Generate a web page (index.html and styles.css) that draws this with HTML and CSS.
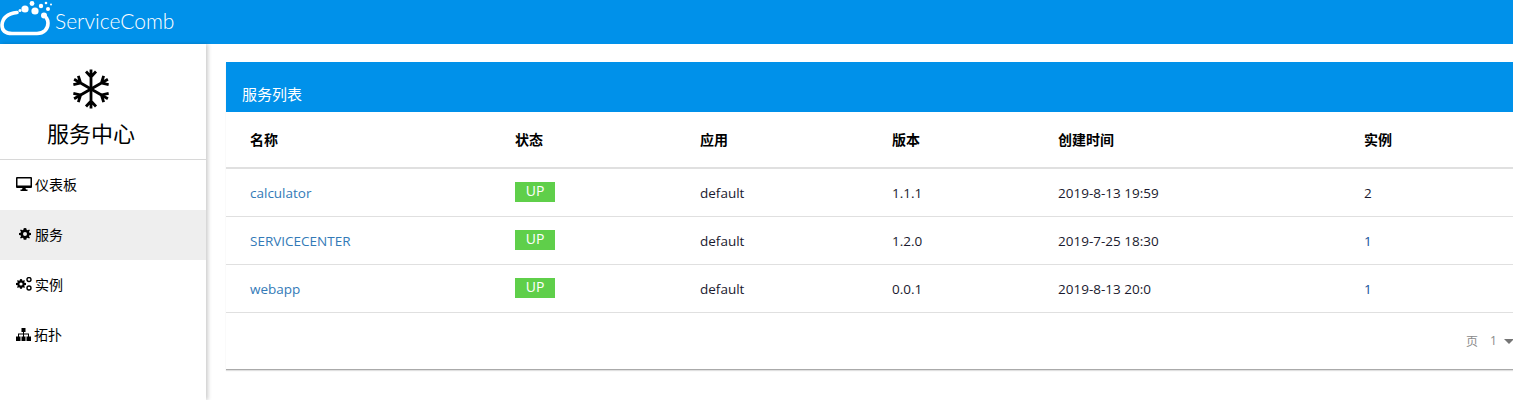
FILE: index.html
```html
<!DOCTYPE html>
<html lang="en">
<head>
  <meta charset="UTF-8">
  <title>ServiceComb</title>
  <link rel="stylesheet" href="styles.css">
</head>
<body>

<header class="topbar">
  <div class="logo">
    <svg class="logo-mark" width="52" height="36" viewBox="0 0 52 36">
      <path d="M17 12.500 C8 13.500 2.500 18 2 25 C2 31 6 33.500 12 33.500 L37 33.500 C44 33.500 48 29 48 23 C48 21 47.500 19.500 46.500 18" fill="none" stroke="#fff" stroke-width="3.600" stroke-linecap="round"/>
      <circle cx="25" cy="9" r="3.600" fill="#fff"/>
      <circle cx="32" cy="3.500" r="2.400" fill="#fff"/>
      <circle cx="35" cy="11" r="3.600" fill="#fff"/>
      <circle cx="44" cy="15.500" r="3" fill="#fff"/>
      <circle cx="41" cy="6" r="2.200" fill="#fff"/>
      <circle cx="48" cy="9" r="2" fill="#fff"/>
      <circle cx="46" cy="3" r="1.300" fill="#fff"/>
      <circle cx="51" cy="4.500" r="1" fill="#fff"/>
      <circle cx="20" cy="10.500" r="1.500" fill="#fff"/>
    </svg>
    <span class="logo-text">ServiceComb</span>
  </div>
</header>

<div class="layout">
  <aside class="sidebar">
    <div class="brand">
      <svg class="brand-icon" width="38" height="40" viewBox="-19 -20 38 40">
        <g fill="none" stroke="#000" stroke-width="2.800">
          <path d="M0 0 V-19.500 M-5 -17.500 L0 -12 L5 -17.500"/>
          <path d="M0 0 V-19.500 M-5 -17.500 L0 -12 L5 -17.500" transform="rotate(60)"/>
          <path d="M0 0 V-19.500 M-5 -17.500 L0 -12 L5 -17.500" transform="rotate(120)"/>
          <path d="M0 0 V-19.500 M-5 -17.500 L0 -12 L5 -17.500" transform="rotate(180)"/>
          <path d="M0 0 V-19.500 M-5 -17.500 L0 -12 L5 -17.500" transform="rotate(240)"/>
          <path d="M0 0 V-19.500 M-5 -17.500 L0 -12 L5 -17.500" transform="rotate(300)"/>
        </g>
      </svg>
      <div class="brand-title">服务中心</div>
    </div>
    <nav class="menu">
      <a class="menu-item">
        <svg class="menu-icon" width="16" height="14" viewBox="0 0 16 14">
          <path d="M1 0 H15 A1 1 0 0 1 16 1 V10 A1 1 0 0 1 15 11 H1 A1 1 0 0 1 0 10 V1 A1 1 0 0 1 1 0 Z M1.500 1.500 V8.500 H14.500 V1.500 Z M6.500 11 H9.500 L10 12.500 H11.500 V14 H4.500 V12.500 H6 Z" fill="#000" fill-rule="evenodd"/>
        </svg>
        <span>仪表板</span>
      </a>
      <a class="menu-item active">
        <svg class="menu-icon gear" width="12" height="12" viewBox="0 0 12 12">
          <path d="M6 0 L7.300 0.200 L7.600 1.800 L8.700 2.300 L10.100 1.400 L10.900 2.300 L10 3.700 L10.400 4.800 L12 5.100 V6.900 L10.400 7.200 L10 8.300 L10.900 9.700 L10.100 10.600 L8.700 9.700 L7.600 10.200 L7.300 11.800 H4.700 L4.400 10.200 L3.300 9.700 L1.900 10.600 L1.100 9.700 L2 8.300 L1.600 7.200 L0 6.900 V5.100 L1.600 4.800 L2 3.700 L1.100 2.300 L1.900 1.400 L3.300 2.300 L4.400 1.800 L4.700 0.200 Z M6 4 A2 2 0 1 0 6 8 A2 2 0 1 0 6 4 Z" fill="#000" fill-rule="evenodd"/>
        </svg>
        <span>服务</span>
      </a>
      <a class="menu-item">
        <svg class="menu-icon" width="16" height="14" viewBox="0 0 16 14">
          <path d="M5 2 L6 2.200 L6.300 3.400 L7.100 3.800 L8.200 3.100 L8.900 3.900 L8.200 5 L8.500 5.800 L10 6.100 V7.900 L8.500 8.200 L8.200 9 L8.900 10.100 L8.200 10.900 L7.100 10.200 L6.300 10.600 L6 11.800 H4 L3.700 10.600 L2.900 10.200 L1.800 10.900 L1.100 10.100 L1.800 9 L1.500 8.200 L0 7.900 V6.100 L1.500 5.800 L1.800 5 L1.100 3.900 L1.800 3.100 L2.900 3.800 L3.700 3.400 L4 2.200 Z M5 5.400 A1.600 1.600 0 1 0 5 8.600 A1.600 1.600 0 1 0 5 5.400 Z" fill="#000" fill-rule="evenodd"/>
          <circle cx="13" cy="2.500" r="2" fill="none" stroke="#000" stroke-width="1.400"/>
          <circle cx="13" cy="11" r="2" fill="none" stroke="#000" stroke-width="1.400"/>
        </svg>
        <span>实例</span>
      </a>
      <a class="menu-item">
        <svg class="menu-icon" width="15" height="13" viewBox="0 0 15 13">
          <path d="M5.500 0 H9.500 V4 H8 V5.500 H13 V8.500 H12 V6.500 H8 V8.500 H7 V6.500 H3 V8.500 H2 V5.500 H7 V4 H5.500 Z M0 8.500 H4.500 V13 H0 Z M5.500 8.500 H9.500 V13 H5.500 Z M10.500 8.500 H15 V13 H10.500 Z" fill="#000"/>
        </svg>
        <span>拓扑</span>
      </a>
    </nav>
  </aside>

  <main class="content">
    <section class="card">
      <div class="card-header">服务列表</div>
      <table class="service-table">
        <colgroup>
          <col class="col-name">
          <col class="col-status">
          <col class="col-app">
          <col class="col-version">
          <col class="col-time">
          <col class="col-count">
        </colgroup>
        <thead>
          <tr>
            <th>名称</th>
            <th>状态</th>
            <th>应用</th>
            <th>版本</th>
            <th>创建时间</th>
            <th>实例</th>
          </tr>
        </thead>
        <tbody>
          <tr>
            <td><a class="link">calculator</a></td>
            <td><span class="badge">UP</span></td>
            <td>default</td>
            <td>1.1.1</td>
            <td>2019-8-13 19:59</td>
            <td>2</td>
          </tr>
          <tr>
            <td><a class="link">SERVICECENTER</a></td>
            <td><span class="badge">UP</span></td>
            <td>default</td>
            <td>1.2.0</td>
            <td>2019-7-25 18:30</td>
            <td><a class="count-link">1</a></td>
          </tr>
          <tr>
            <td><a class="link">webapp</a></td>
            <td><span class="badge">UP</span></td>
            <td>default</td>
            <td>0.0.1</td>
            <td>2019-8-13 20:0</td>
            <td><a class="count-link">1</a></td>
          </tr>
        </tbody>
      </table>
      <div class="pager">
        <span class="pager-label">页</span>
        <span class="pager-value">1</span>
        <span class="pager-arrow"></span>
      </div>
    </section>
  </main>
</div>

</body>
</html>
```

FILE: styles.css
```css
html, body {
  margin: 0;
  height: 100%;
  background: #fff;
  overflow: hidden;
  font-family: "Open Sans", "Noto Sans CJK SC", sans-serif;
  font-size: 14px;
  color: #000;
}
.topbar {
  height: 44px;
  background: #0091ea;
  display: flex;
  align-items: center;
}
.logo {
  display: flex;
  align-items: center;
  height: 44px;
}
.logo-mark {
  margin-bottom: 8px;
}
.logo-text {
  margin-left: 3px;
  margin-bottom: 3px;
  font-family: Lato, sans-serif;
  font-weight: 300;
  font-size: 21px;
  color: #fff;
}
.layout {
  display: flex;
  height: 356px;
}
.sidebar {
  width: 206px;
  flex-shrink: 0;
  background: #fff;
  box-shadow: 2px 0 4px rgba(0, 0, 0, 0.2);
}
.brand {
  height: 116px;
  box-sizing: border-box;
  border-bottom: 1px solid #d8d8d8;
  display: flex;
  flex-direction: column;
  align-items: center;
  padding: 25px 25px 0 0;
}
.brand-icon {
  display: block;
}
.brand-title {
  margin-top: 9px;
  padding-left: 1px;
  font-size: 22px;
  line-height: 30px;
}
.menu-item {
  display: flex;
  align-items: center;
  height: 50px;
  box-sizing: border-box;
  padding: 0 0 2px 16px;
}
.menu-item.active {
  background: #eee;
}
.menu-icon {
  margin-right: 3px;
}
.gear {
  margin-left: 3px;
  margin-right: 4px;
}
.content {
  flex: 1;
  min-width: 0;
  padding: 18px 0 0 20px;
}
.card {
  width: 1287px;
  border-bottom: 1px solid #aaa;
  box-shadow: 0 1px 1px rgba(0, 0, 0, 0.12);
}
.card-header {
  height: 50px;
  box-sizing: border-box;
  background: #0091ea;
  color: #fff;
  font-size: 15px;
  line-height: 20px;
  padding: 22px 0 0 16px;
}
.service-table {
  width: 100%;
  table-layout: fixed;
  border-collapse: collapse;
}
.col-name { width: 265px; }
.col-status { width: 185px; }
.col-app { width: 192px; }
.col-version { width: 166px; }
.col-time { width: 306px; }
.service-table th {
  height: 56px;
  padding: 0 0 2px 24px;
  text-align: left;
  font-weight: 700;
  border-bottom: 2px solid #e0e0e0;
  box-sizing: border-box;
}
.service-table td {
  height: 48px;
  padding: 2px 0 0 24px;
  border-bottom: 1px solid #e0e0e0;
  box-sizing: border-box;
  font-size: 13.5px;
  color: #1a1a2e;
}
.link {
  color: #337ab7;
}
.count-link {
  color: #14529a;
}
.badge {
  display: block;
  width: 40px;
  height: 20px;
  margin-top: -3px;
  background: #5fcf4a;
  color: #fff;
  font-size: 14px;
  line-height: 18px;
  text-align: center;
}
.pager {
  height: 56px;
  display: flex;
  align-items: center;
  padding: 0 0 0 1240px;
  color: #8a8a8a;
  font-size: 12px;
}
.pager-value {
  margin-left: 12px;
}
.pager-arrow {
  margin-left: 7px;
  margin-top: 2px;
  border-left: 5px solid transparent;
  border-right: 5px solid transparent;
  border-top: 5px solid #757575;
}
```
